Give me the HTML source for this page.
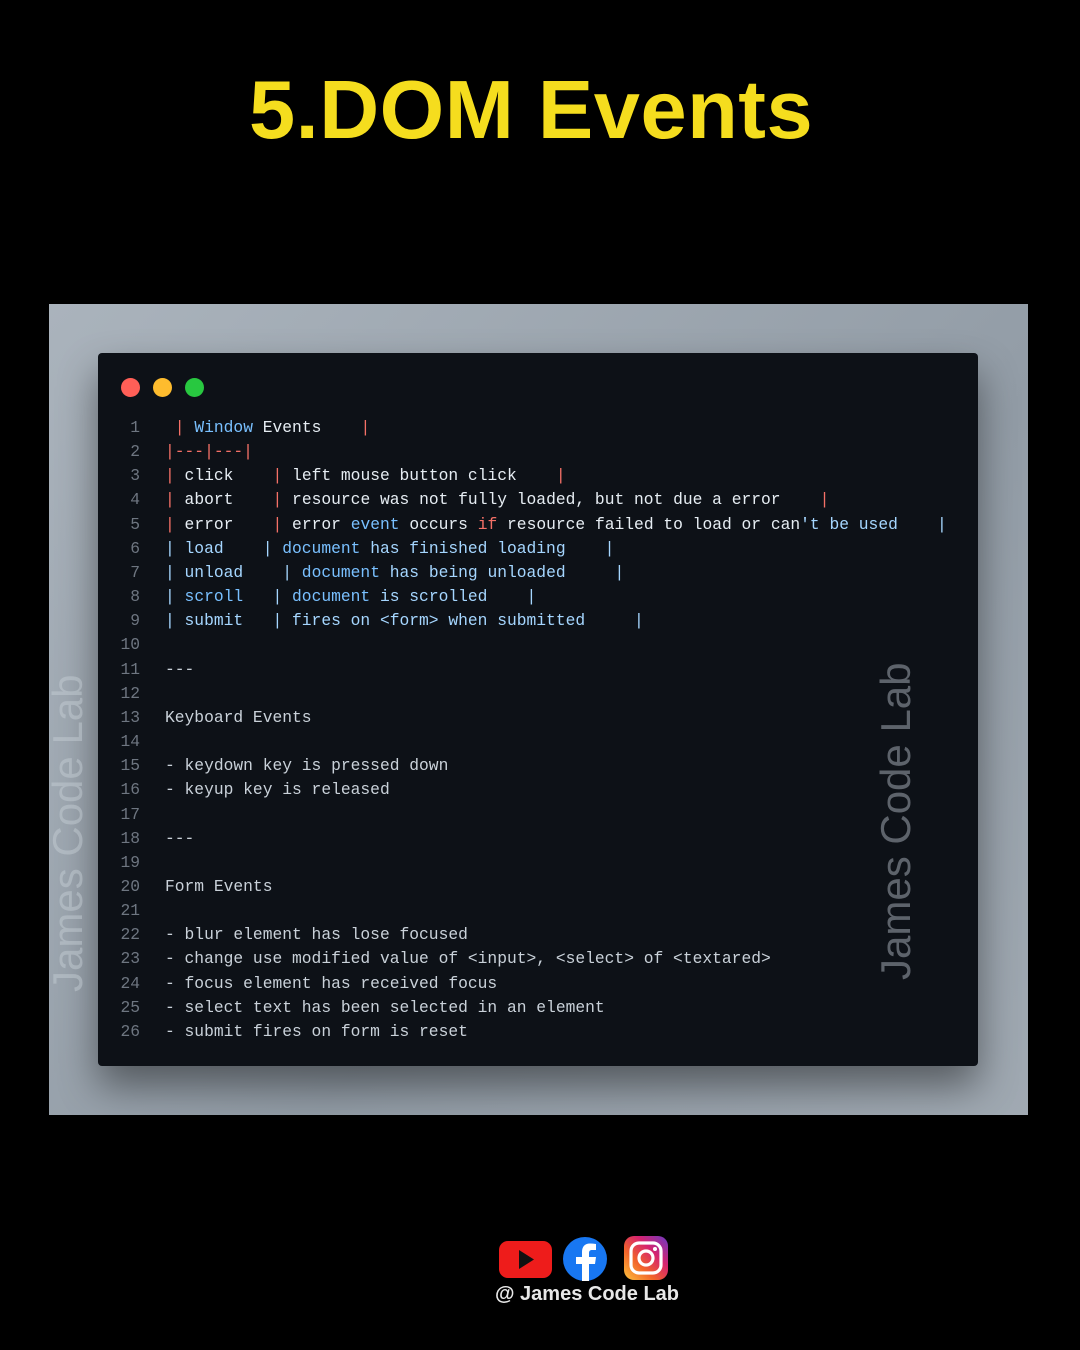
<!DOCTYPE html>
<html><head><meta charset="utf-8"><style>
*{margin:0;padding:0;box-sizing:border-box}
body{width:1080px;height:1350px;background:#000;position:relative;overflow:hidden;font-family:"Liberation Sans",sans-serif}
.title{position:absolute;left:249px;top:62px;font-size:83px;font-weight:bold;color:#f5dd1e;white-space:nowrap;letter-spacing:0.5px}
.outer{position:absolute;left:49px;top:304px;width:979px;height:811px;background:linear-gradient(135deg,#aab3bc,#929ca6 60%,#a0a9b2)}
.card{position:absolute;left:98px;top:353px;width:880px;height:713px;background:#0d1117;border-radius:4px;box-shadow:0 20px 40px rgba(0,0,0,.45)}
.dot{position:absolute;top:378px;width:19px;height:19px;border-radius:50%}
.code{position:absolute;left:0;top:416px;font-family:"Liberation Mono",monospace;font-size:16.3px;line-height:24.15px;color:#e6edf3;white-space:pre}
.ln{position:absolute;width:140px;text-align:right;color:#6e7681;left:0;top:0}
.tx{position:absolute;left:165px;top:0}
.r{color:#f47067}.b{color:#79c0ff}.lb{color:#a5d6ff}.w{color:#c9d1d9}
.wm{position:absolute;font-size:42px;color:rgba(200,208,216,.45);white-space:nowrap;transform:rotate(-90deg);transform-origin:left top}
.handle{position:absolute;left:495px;top:1283px;font-size:20px;font-weight:bold;color:#e8e8e8}
</style></head><body>
<div class="title">5.DOM Events</div>
<div class="outer"></div>
<div class="card"></div>
<div class="wm" style="left:44px;top:992px">James Code Lab</div>
<div class="wm" style="left:872px;top:980px;color:rgba(160,168,176,.55)">James Code Lab</div>
<div class="dot" style="left:121px;background:#ff5f57"></div>
<div class="dot" style="left:153px;background:#febc2e"></div>
<div class="dot" style="left:185px;background:#28c840"></div>
<div class="code"><div class="ln">1
2
3
4
5
6
7
8
9
10
11
12
13
14
15
16
17
18
19
20
21
22
23
24
25
26</div><div class="tx"> <span class="r">|</span> <span class="b">Window</span> Events    <span class="r">|</span>
<span class="r">|---|---|</span>
<span class="r">|</span> click    <span class="r">|</span> left mouse button click    <span class="r">|</span>
<span class="r">|</span> abort    <span class="r">|</span> resource was not fully loaded, but not due a error    <span class="r">|</span>
<span class="r">|</span> error    <span class="r">|</span> error <span class="b">event</span> occurs <span class="r">if</span> resource failed to load or can<span class="lb">'t be used</span>    <span class="lb">|</span>
<span class="lb">| load    | <span class="b">document</span> has finished loading    |</span>
<span class="lb">| unload    | <span class="b">document</span> has being unloaded     |</span>
<span class="lb">| <span class="b">scroll</span>   | <span class="b">document</span> is scrolled    |</span>
<span class="lb">| submit   | fires on &lt;form&gt; when submitted     |</span>

<span class="w">---</span>

<span class="w">Keyboard Events</span>

<span class="w">- keydown key is pressed down</span>
<span class="w">- keyup key is released</span>

<span class="w">---</span>

<span class="w">Form Events</span>

<span class="w">- blur element has lose focused</span>
<span class="w">- change use modified value of &lt;input&gt;, &lt;select&gt; of &lt;textared&gt;</span>
<span class="w">- focus element has received focus</span>
<span class="w">- select text has been selected in an element</span>
<span class="w">- submit fires on form is reset</span></div></div>
<svg style="position:absolute;left:499px;top:1236px" width="170" height="46" viewBox="0 0 170 46">
<rect x="0" y="5" width="53" height="37" rx="9" fill="#ee1c1b"/>
<path d="M20 14 L35 23.5 L20 33 Z" fill="#111"/>
<circle cx="86" cy="23" r="22" fill="#1877f2"/>
<path d="M90 45 V28 H96 L97 21 H90 V17 C90 15 91 14 93 14 H97 V8 C95 7.7 93 7.5 91 7.5 C85.5 7.5 83 11 83 16 V21 H77 V28 H83 V45 Z" fill="#fff"/>
<defs><linearGradient id="ig" x1="0" y1="1" x2="1" y2="0"><stop offset="0" stop-color="#fdc33b"/><stop offset=".35" stop-color="#f2642a"/><stop offset=".65" stop-color="#d6236f"/><stop offset="1" stop-color="#6a3bc7"/></linearGradient></defs>
<rect x="125" y="0" width="44" height="44" rx="10" fill="url(#ig)"/>
<rect x="132" y="7" width="30" height="30" rx="8" fill="none" stroke="#fff" stroke-width="3.2"/>
<circle cx="147" cy="22" r="7" fill="none" stroke="#fff" stroke-width="3.2"/>
<circle cx="156" cy="13" r="2" fill="#fff"/>
</svg>
<div class="handle">@ James Code Lab</div>
</body></html>
